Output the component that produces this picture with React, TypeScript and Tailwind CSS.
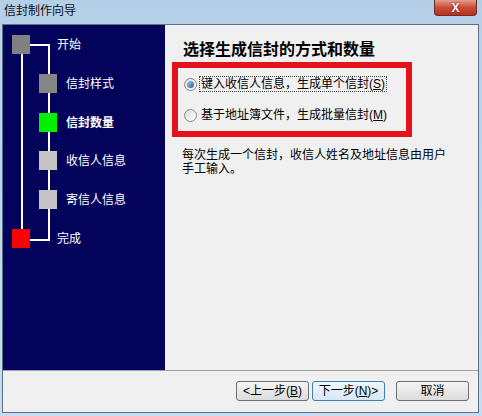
import React from 'react';

type Step = { label: string; color: string; x: number; y: number; textX: number; bold?: boolean };

const steps: Step[] = [
  { label: '开始', color: '#808080', x: 9, y: 10, textX: 54 },
  { label: '信封样式', color: '#858585', x: 36, y: 49, textX: 63 },
  { label: '信封数量', color: '#00f000', x: 36, y: 88, textX: 63, bold: true },
  { label: '收信人信息', color: '#c4c4c4', x: 36, y: 126, textX: 63 },
  { label: '寄信人信息', color: '#c4c4c4', x: 36, y: 165, textX: 63 },
  { label: '完成', color: '#ff0000', x: 9, y: 204, textX: 54 },
];

const StepTree: React.FC = () => (
  <div className="relative w-[162px] h-full bg-[#03035c]">
    <svg className="absolute left-0 top-0" width="162" height="345">
      <rect x="18" y="28" width="2" height="178" fill="#fff" />
      <rect x="26" y="19" width="21" height="2" fill="#fff" />
      <rect x="45" y="19" width="2" height="197" fill="#fff" />
      <rect x="26" y="214" width="21" height="2" fill="#fff" />
      {steps.map((s) => (
        <rect key={s.label} x={s.x} y={s.y} width="18" height="19" fill={s.color} />
      ))}
    </svg>
    {steps.map((s) => (
      <span
        key={s.label}
        className={`absolute text-[12px] leading-[14px] text-white ${s.bold ? 'font-bold' : ''}`}
        style={{ left: s.textX, top: s.y + 3 }}
      >
        {s.label}
      </span>
    ))}
  </div>
);

const Radio: React.FC<{ checked?: boolean }> = ({ checked }) => (
  <span className="w-[13px] h-[13px] rounded-full border border-[#8a8a8a] bg-gradient-to-br from-[#dcdcdc] to-[#ffffff] flex items-center justify-center shrink-0">
    {checked && <span className="w-[7px] h-[7px] rounded-full bg-gradient-to-br from-[#9fd0f0] to-[#1a5fa0]" />}
  </span>
);

const WinButton: React.FC<{ children: React.ReactNode; focused?: boolean }> = ({ children, focused }) => (
  <button
    className={`w-[73px] h-[20px] rounded-[3px] border text-[12px] leading-[14px] text-black flex items-center justify-center ${
      focused
        ? 'border-[#3c7fb1] bg-gradient-to-b from-[#f0f7fd] to-[#d6e8f7]'
        : 'border-[#707070] bg-gradient-to-b from-[#f4f4f4] to-[#dcdcdc]'
    }`}
  >
    {children}
  </button>
);

export default function App() {
  return (
    <div className="w-[482px] h-[416px] bg-gradient-to-b from-[#b6cfe9] to-[#c8dcf1] flex flex-col font-['Liberation_Sans','Noto_Sans_CJK_SC',sans-serif] overflow-hidden">
      <div className="h-[24px] flex items-start justify-between">
        <span className="pl-[4px] pt-[4px] text-[12px] leading-[14px] text-[#111]">信封制作向导</span>
        <div className="mr-[5px] w-[43px] h-[16px] rounded-b-[4px] border border-t-0 border-[#6b2c25] bg-gradient-to-b from-[#e29b8c] via-[#cc4b38] to-[#b8301f] flex items-center justify-center">
          <span className="text-white font-bold text-[12px] leading-[12px] [text-shadow:0_0_2px_#400]">X</span>
        </div>
      </div>
      <div className="ml-[2px] mr-[3px] h-[389px] border border-[#5f6f84] bg-[#f0f0f0] flex flex-col">
        <div className="h-[345px] flex">
          <StepTree />
          <div className="flex-1 flex flex-col pl-[7px]">
            <div className="pl-[11px] pt-[16px] text-[16px] leading-[18px] font-bold text-black">
              选择生成信封的方式和数量
            </div>
            <div className="mt-[3px] w-[240px] h-[75px] border-[6px] border-[#e3121b] flex flex-col pl-[6px] pt-[8px] gap-[16px]">
              <label className="flex items-center gap-[2px] text-[12px] leading-[14px] text-black">
                <Radio checked />
                <span className="border border-dotted border-[#444] px-[1px]">
                  键入收信人信息，生成单个信封(<span className="underline">S</span>)
                </span>
              </label>
              <label className="flex items-center gap-[3px] text-[12px] leading-[14px] text-black">
                <Radio />
                <span className="px-[1px]">
                  基于地址簿文件，生成批量信封(<span className="underline">M</span>)
                </span>
              </label>
            </div>
            <p className="mt-[11px] pl-[10px] w-[278px] text-[12px] leading-[14px] text-black">
              每次生成一个信封，收信人姓名及地址信息由用户手工输入。
            </p>
          </div>
        </div>
        <div className="flex-1 border-t border-[#a0a0a0] flex items-center justify-end pr-[9px] pb-[1px]">
          <div className="flex gap-[3px]">
            <WinButton>
              &lt;上一步(<span className="underline">B</span>)
            </WinButton>
            <WinButton focused>
              下一步(<span className="underline">N</span>)&gt;
            </WinButton>
          </div>
          <div className="ml-[11px]">
            <WinButton>取消</WinButton>
          </div>
        </div>
      </div>
    </div>
  );
}
